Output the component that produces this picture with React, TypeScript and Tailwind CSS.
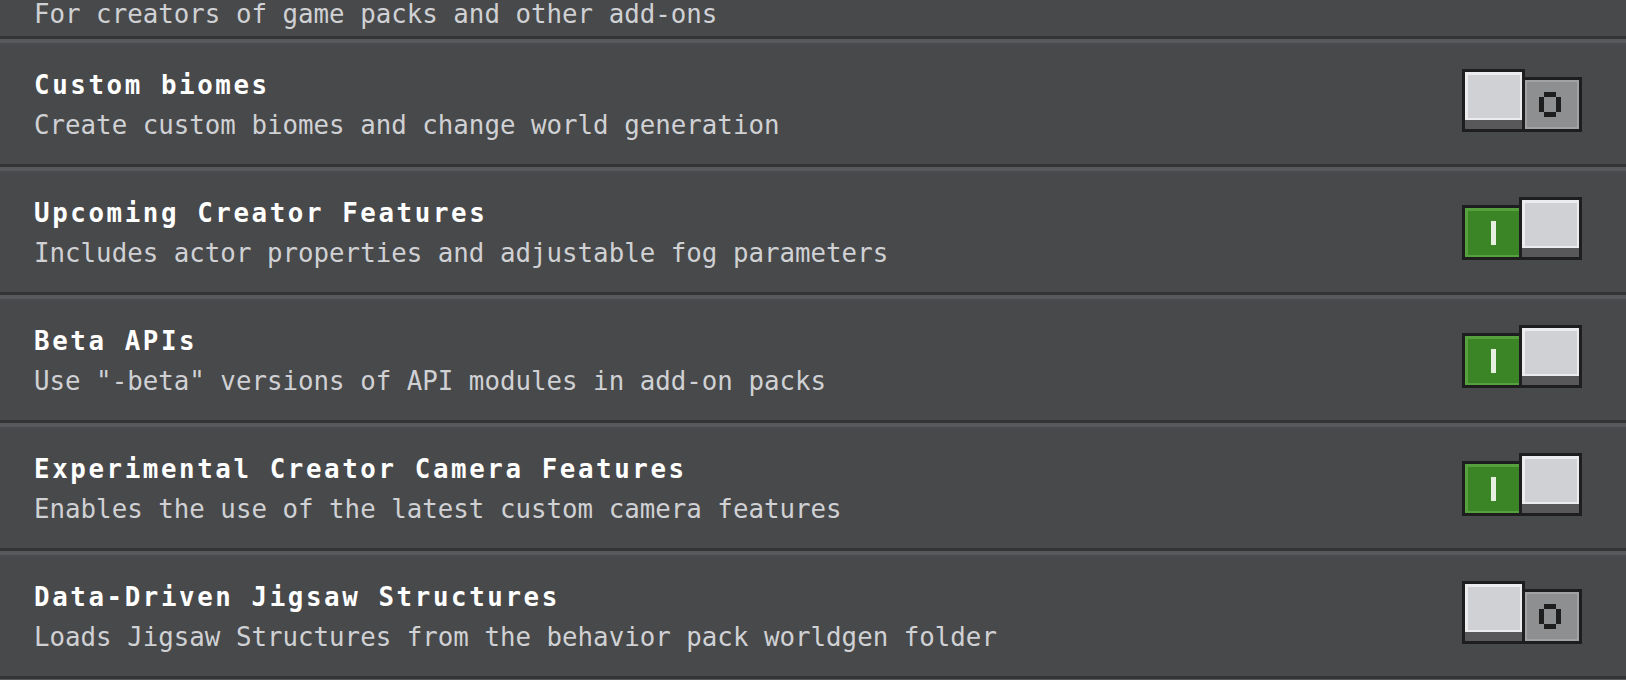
import React from "react";

const rows = [
  { title: "Custom biomes", desc: "Create custom biomes and change world generation", on: false },
  { title: "Upcoming Creator Features", desc: "Includes actor properties and adjustable fog parameters", on: true },
  { title: "Beta APIs", desc: 'Use "-beta" versions of API modules in add-on packs', on: true },
  { title: "Experimental Creator Camera Features", desc: "Enables the use of the latest custom camera features", on: true },
  { title: "Data-Driven Jigsaw Structures", desc: "Loads Jigsaw Structures from the behavior pack worldgen folder", on: false },
];

function Knob() {
  return (
    <div className="w-[63px] h-[63px] border-[3px] border-[#1e1e1f] flex flex-col bg-[#1e1e1f]">
      <div className="flex-1 bg-[#d0d1d4] border-t-[3px] border-l-[3px] border-r-[2px] border-b-[2px] border-[#ececee]" />
      <div className="h-[9px] bg-[#58585a]" />
    </div>
  );
}

function Toggle({ on }: { on: boolean }) {
  if (on) {
    return (
      <div className="flex items-end w-[120px] h-[63px]">
        <div className="w-[57px] h-[55px] border-[3px] border-r-0 border-[#1e1e1f] bg-[#1e1e1f] flex">
          <div className="flex-1 bg-[#3c8527] border-t-[3px] border-l-[3px] border-b-[2px] border-[#56a03e] flex items-center justify-center">
            <div className="w-[5px] h-[24px] bg-[#e6efe1]" />
          </div>
        </div>
        <Knob />
      </div>
    );
  }
  return (
    <div className="flex items-end w-[120px] h-[63px]">
      <Knob />
      <div className="w-[57px] h-[55px] border-[3px] border-l-0 border-[#1e1e1f] bg-[#1e1e1f] flex">
        <div className="flex-1 bg-[#8e8f91] border-[2px] border-[#a1a2a4] flex items-center justify-center">
          <svg width="22" height="25" viewBox="0 0 22 25" className="-ml-[4px]">
            <rect x="0" y="5" width="5" height="15" fill="#1e1e1f" />
            <rect x="17" y="5" width="5" height="15" fill="#1e1e1f" />
            <rect x="5" y="0" width="12" height="5" fill="#1e1e1f" />
            <rect x="5" y="20" width="12" height="5" fill="#1e1e1f" />
          </svg>
        </div>
      </div>
    </div>
  );
}

function Separator() {
  return (
    <div className="flex flex-col">
      <div className="h-[3px] bg-[#333436]" />
      <div className="h-[4px] bg-[#58595c]" />
    </div>
  );
}

export default function App() {
  return (
    <div
      className="w-[1626px] h-[680px] overflow-hidden bg-[#48494b] flex flex-col"
      style={{ fontFamily: '"DejaVu Sans Mono", "Liberation Mono", monospace' }}
    >
      <div className="h-[36px] shrink-0 flex items-end pl-[34px] pb-[9px]">
        <div className="text-[25.8px] leading-[26px] text-[#d0d1d4] whitespace-nowrap">
          For creators of game packs and other add-ons
        </div>
      </div>
      {rows.map((r) => (
        <React.Fragment key={r.title}>
          <Separator />
          <div className="h-[121px] shrink-0 flex items-start justify-between pl-[34px] pr-[44px]">
            <div className="flex flex-col pt-[22px]">
              <div className="text-[25.8px] leading-[40px] font-bold tracking-[2.6px] text-white whitespace-nowrap">
                {r.title}
              </div>
              <div className="text-[25.8px] leading-[40px] text-[#d0d1d4] whitespace-nowrap">
                {r.desc}
              </div>
            </div>
            <div className="pt-[26px]">
              <Toggle on={r.on} />
            </div>
          </div>
        </React.Fragment>
      ))}
      <Separator />
    </div>
  );
}
